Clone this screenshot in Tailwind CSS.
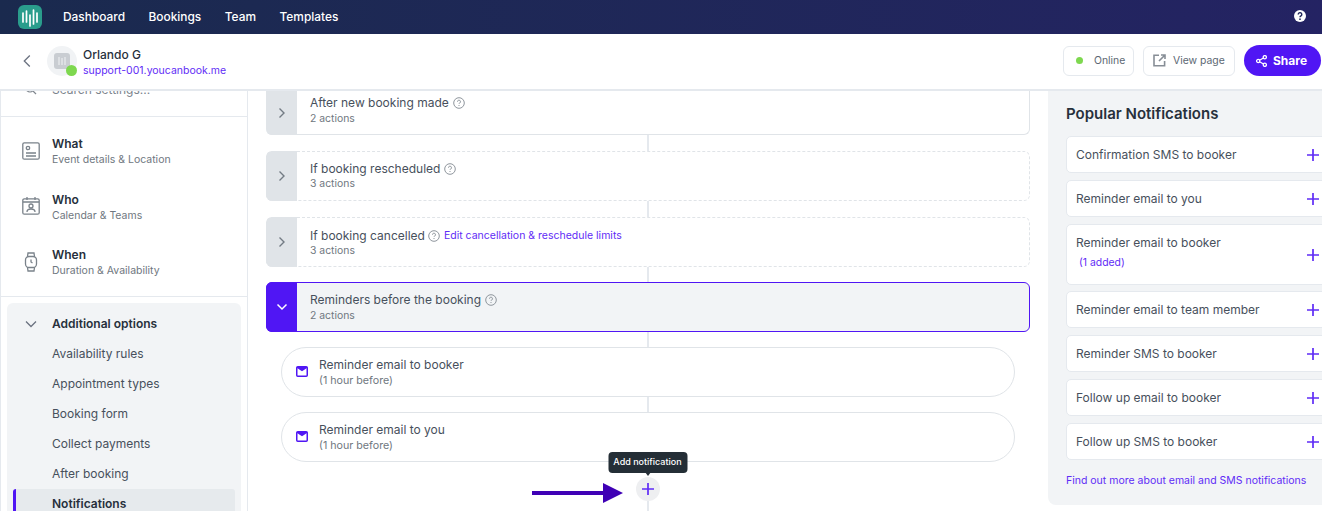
<!DOCTYPE html>
<html lang="en">
<head>
    <meta charset="UTF-8">
    <title>Notifications</title>
    <script src="https://cdn.jsdelivr.net/npm/@tailwindcss/browser@4"></script>
</head>
<body class="h-[511px] w-[1322px] overflow-hidden bg-white font-['Inter',sans-serif] text-[#47505c]">
    <!-- top nav -->
    <nav class="flex h-[34px] items-center bg-gradient-to-r from-[#1a2a4e] to-[#242363] pl-[18px] pr-[15px] text-white">
        <div class="flex h-[24px] w-[24px] items-center justify-center rounded-[6px] bg-[#2a9d8c]">
            <svg width="18" height="19" viewBox="0 0 18 19" fill="none" stroke="#fff" stroke-width="1.700" stroke-linecap="round"><path d="M2 5v9M5.500 3v11M9 7v11M12.500 2v14M16 5v9"/></svg>
        </div>
        <div class="ml-[21px] flex gap-[23.5px] text-[11.9px] font-medium">
            <a>Dashboard</a><a>Bookings</a><a>Team</a><a>Templates</a>
        </div>
        <svg class="ml-auto -mt-[2px]" width="14" height="14" viewBox="0 0 14 14"><circle cx="7" cy="7" r="6" fill="#fff"/><path d="M5.200 5.400a1.800 1.800 0 1 1 2.700 1.600c-.6.300-.9.600-.9 1.200" fill="none" stroke="#1f2659" stroke-width="1.400"/><circle cx="7" cy="10.200" r=".85" fill="#1f2659"/></svg>
    </nav>

    <!-- account header -->
    <header class="relative z-10 flex h-[57px] items-center border-b-2 border-[#e5e9ee] bg-white pb-[2px] pl-[23px] pr-[1px]">
        <svg width="8" height="14" viewBox="0 0 8 14" fill="none" stroke="#6b7280" stroke-width="1.300"><path d="M6.800 1.500 1.300 7l5.500 5.500"/></svg>
        <div class="relative ml-[16px] flex h-[30px] w-[30px] items-center justify-center rounded-full bg-[#f1f3f5]">
            <div class="flex h-[16px] w-[16px] items-center justify-center rounded-[3px] bg-[#c9cdd2]">
                <svg width="10" height="10" viewBox="0 0 10 10" fill="none" stroke="#f1f3f5" stroke-width="1"><path d="M2 1v8M5 2v7M8 1v8"/></svg>
            </div>
            <span class="absolute right-0 bottom-0 h-[11px] w-[11px] rounded-full bg-[#7ed84f]"></span>
        </div>
        <div class="ml-[6px] mt-[3px]">
            <div class="text-[12px] leading-[16px] font-medium text-[#27303c]">Orlando G</div>
            <div class="text-[10.5px] leading-[15px] text-[#5f2cf6]">support-001.youcanbook.me</div>
        </div>
        <div class="ml-auto flex items-center gap-[9px]">
            <div class="flex h-[30px] w-[71px] items-center rounded-[6px] border border-[#e5e9ee] pl-[12px] text-[10.4px] text-[#5c6773]">
                <span class="h-[7px] w-[7px] rounded-full bg-[#7ed84f]"></span><span class="ml-[11px]">Online</span>
            </div>
            <div class="flex h-[30px] w-[92px] items-center rounded-[6px] border border-[#e5e9ee] pl-[9px] text-[10.4px] text-[#5c6773]">
                <svg width="13" height="13" viewBox="0 0 13 13" fill="none" stroke="#878e96" stroke-width="1.600"><path d="M6 1.200H1v10.600h10.600V7M6 7l5.500-5.500M8 1h4v4"/></svg><span class="ml-[7px]">View page</span>
            </div>
            <div class="flex h-[31px] w-[77px] items-center rounded-full bg-[#5016f4] pl-[12px] text-[12px] font-bold text-white">
                <svg width="11" height="12" viewBox="0 0 11 12" fill="none" stroke="#fff" stroke-width="1.300"><circle cx="2.200" cy="6" r="1.600"/><circle cx="8.800" cy="2.200" r="1.600"/><circle cx="8.800" cy="9.800" r="1.600"/><path d="M3.600 5.200 7.400 3M3.600 6.800 7.400 9"/></svg><span class="ml-[6px]">Share</span>
            </div>
        </div>
    </header>

    <div class="relative flex h-[420px] overflow-hidden">
        <!-- settings sidebar -->
        <aside class="h-full w-[248px] shrink-0 overflow-hidden border-x border-[#e5e9ee] bg-white">
            <div class="flex h-[26px] items-start border-b border-[#e5e9ee] pl-[24px]">
                <svg class="mt-[-8px]" width="12" height="12" viewBox="0 0 12 12" fill="none" stroke="#80878f" stroke-width="1.200"><circle cx="5" cy="5" r="4"/><path d="m8 8 3 3"/></svg>
                <span class="mt-[-9px] ml-[15px] text-[12px] leading-[16px] text-[#7b838c]">Search settings...</span>
            </div>
            <div class="flex h-[56px] items-start pt-[20px] pl-[21px]">
                <svg width="18" height="18" viewBox="0 0 18 18" fill="none" stroke="#7a828a" stroke-width="1.300" class="mt-[5px]"><rect x=".8" y=".8" width="16.400" height="16.400" rx="1.500"/><circle cx="6" cy="6" r="1.700"/><path d="M4 11h10M4 14h10"/></svg>
                <div class="ml-[12px] -mt-[1px]">
                    <div class="text-[12px] leading-[16px] font-semibold text-[#27303c]">What</div>
                    <div class="text-[10.5px] leading-[15px] text-[#6f7780]">Event details &amp; Location</div>
                </div>
            </div>
            <div class="flex h-[55px] items-start pt-[20px] pl-[21px]">
                <svg width="18" height="18" viewBox="0 0 18 18" fill="none" stroke="#7a828a" stroke-width="1.300" class="mt-[4px]"><rect x=".8" y="1.800" width="16.400" height="15.400" rx="1.500"/><path d="M1 5h16M5 0v3M13 0v3M5 15c0-2 2-3 4-3s4 1 4 3"/><circle cx="9" cy="9" r="2"/></svg>
                <div class="ml-[12px] -mt-[1px]">
                    <div class="text-[12px] leading-[16px] font-semibold text-[#27303c]">Who</div>
                    <div class="text-[10.5px] leading-[15px] text-[#6f7780]">Calendar &amp; Teams</div>
                </div>
            </div>
            <div class="flex h-[69px] items-start border-b border-[#e5e9ee] pt-[20px] pl-[21px]">
                <svg width="18" height="20" viewBox="0 0 18 20" fill="none" stroke="#7a828a" stroke-width="1.300" class="mt-[4px]"><rect x="3.500" y="4.500" width="11" height="11" rx="3.500"/><path d="M5.500 4.500 6 1h6l.5 3.500M5.500 15.500 6 19h6l.5-3.500M9 7.500V10l1.500 1"/></svg>
                <div class="ml-[12px] -mt-[1px]">
                    <div class="text-[12px] leading-[16px] font-semibold text-[#27303c]">When</div>
                    <div class="text-[10.5px] leading-[15px] text-[#6f7780]">Duration &amp; Availability</div>
                </div>
            </div>
            <div class="mx-[6px] mt-[6px] h-[240px] rounded-[6px] bg-[#f2f4f6] pt-[13px]">
                <div class="flex h-[16px] items-center pl-[18px] text-[12px] font-semibold text-[#27303c]">
                    <svg width="12" height="8" viewBox="0 0 12 8" fill="none" stroke="#6b7280" stroke-width="1.300"><path d="m1 1.500 5 5 5-5"/></svg>
                    <span class="ml-[15px]">Additional options</span>
                </div>
                <div class="mt-[12px] flex flex-col gap-[10px] pl-[45px] text-[12px] leading-[20px]">
                    <a>Availability rules</a>
                    <a>Appointment types</a>
                    <a>Booking form</a>
                    <a>Collect payments</a>
                    <a>After booking</a>
                </div>
                <div class="mx-[6px] mt-[5px] flex h-[30px] items-center rounded-[3px] border-l-[3px] border-[#5016f4] bg-[#e6eaed] pl-[36px] text-[12px] font-semibold text-[#27303c]">Notifications</div>
            </div>
        </aside>

        <!-- notification flow -->
        <main class="w-[800px] shrink-0 pl-[18px]">
            <div class="w-[764px]">
                <div class="flex h-[44px] rounded-b-[6px] border-r border-b border-[#e0e4e8]">
                    <div class="-mb-[1px] flex w-[31px] items-center justify-center rounded-bl-[6px] bg-[#e0e4e8]"><svg width="8" height="12" viewBox="0 0 8 12" fill="none" stroke="#737b84" stroke-width="1.400"><path d="m1.500 1.500 4.500 4.500-4.500 4.500"/></svg></div>
                    <div class="pt-[4px] pl-[13px]">
                        <div class="flex items-center gap-[4px] text-[12px] leading-[16px]">After new booking made <svg width="12" height="12" viewBox="0 0 12 12" fill="none" stroke="#8f969d"><circle cx="6" cy="6" r="5.300"/><path d="M4.500 4.700a1.500 1.500 0 1 1 2.200 1.300c-.5.300-.7.500-.7 1M6 8v1"/></svg></div>
                        <div class="text-[10.4px] leading-[15px] text-[#6f7780]">2 actions</div>
                    </div>
                </div>
                <div class="mx-auto h-[16px] w-[2px] bg-[#e5e9ee]"></div>
                <div class="flex h-[50px] rounded-[6px] border border-dashed border-[#e0e4e8]">
                    <div class="-my-[1px] -ml-[1px] flex w-[31px] items-center justify-center rounded-l-[6px] bg-[#e0e4e8]"><svg width="8" height="12" viewBox="0 0 8 12" fill="none" stroke="#737b84" stroke-width="1.400"><path d="m1.500 1.500 4.500 4.500-4.500 4.500"/></svg></div>
                    <div class="pt-[9px] pl-[13px]">
                        <div class="flex items-center gap-[4px] text-[12px] leading-[16px]">If booking rescheduled <svg width="12" height="12" viewBox="0 0 12 12" fill="none" stroke="#8f969d"><circle cx="6" cy="6" r="5.300"/><path d="M4.500 4.700a1.500 1.500 0 1 1 2.200 1.300c-.5.300-.7.500-.7 1M6 8v1"/></svg></div>
                        <div class="text-[10.4px] leading-[14px] text-[#6f7780]">3 actions</div>
                    </div>
                </div>
                <div class="mx-auto h-[16px] w-[2px] bg-[#e5e9ee]"></div>
                <div class="flex h-[50px] rounded-[6px] border border-dashed border-[#e0e4e8]">
                    <div class="-my-[1px] -ml-[1px] flex w-[31px] items-center justify-center rounded-l-[6px] bg-[#e0e4e8]"><svg width="8" height="12" viewBox="0 0 8 12" fill="none" stroke="#737b84" stroke-width="1.400"><path d="m1.500 1.500 4.500 4.500-4.500 4.500"/></svg></div>
                    <div class="pt-[9px] pl-[13px]">
                        <div class="flex items-center text-[12px] leading-[16px]">If booking cancelled <svg class="ml-[3px]" width="12" height="12" viewBox="0 0 12 12" fill="none" stroke="#8f969d"><circle cx="6" cy="6" r="5.300"/><path d="M4.500 4.700a1.500 1.500 0 1 1 2.200 1.300c-.5.300-.7.500-.7 1M6 8v1"/></svg><span class="ml-[4px] pt-[1px] text-[10.5px] text-[#5f2cf6]">Edit cancellation &amp; reschedule limits</span></div>
                        <div class="text-[10.4px] leading-[14px] text-[#6f7780]">3 actions</div>
                    </div>
                </div>
                <div class="mx-auto h-[15px] w-[2px] bg-[#e5e9ee]"></div>
                <div class="flex h-[50px] rounded-[6px] border border-[#5016f4] bg-[#f2f4f6]">
                    <div class="-my-[1px] -ml-[1px] flex w-[31px] items-center justify-center rounded-l-[6px] bg-[#5016f4]"><svg width="12" height="8" viewBox="0 0 12 8" fill="none" stroke="#fff" stroke-width="1.500"><path d="m1.500 1.500 4.500 4.500 4.500-4.500"/></svg></div>
                    <div class="pt-[9px] pl-[13px]">
                        <div class="flex items-center gap-[4px] text-[12px] leading-[16px]">Reminders before the booking <svg width="12" height="12" viewBox="0 0 12 12" fill="none" stroke="#8f969d"><circle cx="6" cy="6" r="5.300"/><path d="M4.500 4.700a1.500 1.500 0 1 1 2.200 1.300c-.5.300-.7.500-.7 1M6 8v1"/></svg></div>
                        <div class="text-[10.4px] leading-[15px] text-[#6f7780]">2 actions</div>
                    </div>
                </div>
                <div class="mx-auto h-[15px] w-[2px] bg-[#e5e9ee]"></div>
                <div class="mx-[15px] flex h-[50px] items-center rounded-full border border-[#e0e4e8] pl-[14px]">
                    <svg class="-mt-[2px]" width="12" height="11" viewBox="0 0 12 11" fill="none"><rect x=".75" y=".75" width="10.500" height="9.500" rx="1" stroke="#5016f4" stroke-width="1.500"/><path fill="#5016f4" d="M1 1h10v1L6 5.200 1 2Z"/></svg>
                    <div class="ml-[11px]">
                        <div class="text-[12px] leading-[16px]">Reminder email to booker</div>
                        <div class="text-[10.7px] leading-[15px] text-[#6f7780]">(1 hour before)</div>
                    </div>
                </div>
                <div class="mx-auto h-[15px] w-[2px] bg-[#e5e9ee]"></div>
                <div class="mx-[15px] flex h-[50px] items-center rounded-full border border-[#e0e4e8] pl-[14px]">
                    <svg class="-mt-[2px]" width="12" height="11" viewBox="0 0 12 11" fill="none"><rect x=".75" y=".75" width="10.500" height="9.500" rx="1" stroke="#5016f4" stroke-width="1.500"/><path fill="#5016f4" d="M1 1h10v1L6 5.200 1 2Z"/></svg>
                    <div class="ml-[11px]">
                        <div class="text-[12px] leading-[16px]">Reminder email to you</div>
                        <div class="text-[10.7px] leading-[15px] text-[#6f7780]">(1 hour before)</div>
                    </div>
                </div>
                <div class="relative mx-auto mt-[15px] flex h-[24px] w-[24px] items-center justify-center rounded-full bg-[#eeeff1]">
                    <svg width="12" height="12" viewBox="0 0 12 12" stroke="#5f2cf6" stroke-width="1.700"><path d="M6 0v12M0 6h12"/></svg>
                    <div class="absolute top-[-25px] left-1/2 flex h-[21px] w-[79px] -translate-x-1/2 items-center justify-center rounded-[4px] bg-[#242e36] pr-[1px] pb-[1px] text-[9px] font-medium whitespace-nowrap text-white">Add notification</div>
                    <div class="absolute top-[-5px] left-1/2 h-0 w-0 -translate-x-1/2 border-x-[3px] border-t-[4px] border-x-transparent border-t-[#242e36]"></div>
                    <!-- annotation arrow -->
                    <svg class="absolute top-[6px] left-[-104px]" width="91" height="20" viewBox="0 0 91 20"><path fill="#3f00b5" d="M0 8h71V0l20 10-20 10v-8H0Z"/></svg>
                </div>
                <div class="mx-auto h-[12px] w-[2px] bg-[#e5e9ee]"></div>
            </div>
        </main>

        <!-- popular notifications -->
        <section class="-mt-[1px] h-[415px] w-[300px] shrink-0 rounded-b-[8px] bg-[#f2f4f6] pt-[14px] pl-[18px]">
            <h2 class="text-[15px] leading-[20px] font-semibold text-[#27303c]">Popular Notifications</h2>
            <div class="mt-[12px] flex w-[280px] flex-col gap-[7px] text-[12px]">
                <div class="flex h-[37px] items-center rounded-[5px] border border-[#e5e9ee] bg-white pl-[9px]">Confirmation SMS to booker<svg class="absolute left-[1307px]" width="12" height="12" viewBox="0 0 12 12" stroke="#5f2cf6" stroke-width="1.700"><path d="M6 0v12M0 6h12"/></svg></div>
                <div class="flex h-[37px] items-center rounded-[5px] border border-[#e5e9ee] bg-white pl-[9px]">Reminder email to you<svg class="absolute left-[1307px]" width="12" height="12" viewBox="0 0 12 12" stroke="#5f2cf6" stroke-width="1.700"><path d="M6 0v12M0 6h12"/></svg></div>
                <div class="-mb-[1px] flex h-[61px] items-center rounded-[5px] border border-[#e5e9ee] bg-white pl-[9px]">
                    <div class="-mt-[5px]"><div class="leading-[16px]">Reminder email to booker</div><div class="mt-[4px] pl-[3px] text-[10.4px] leading-[15px] text-[#5f2cf6]">(1 added)</div></div>
                    <svg class="absolute left-[1307px]" width="12" height="12" viewBox="0 0 12 12" stroke="#5f2cf6" stroke-width="1.700"><path d="M6 0v12M0 6h12"/></svg>
                </div>
                <div class="flex h-[37px] items-center rounded-[5px] border border-[#e5e9ee] bg-white pl-[9px]">Reminder email to team member<svg class="absolute left-[1307px]" width="12" height="12" viewBox="0 0 12 12" stroke="#5f2cf6" stroke-width="1.700"><path d="M6 0v12M0 6h12"/></svg></div>
                <div class="flex h-[37px] items-center rounded-[5px] border border-[#e5e9ee] bg-white pl-[9px]">Reminder SMS to booker<svg class="absolute left-[1307px]" width="12" height="12" viewBox="0 0 12 12" stroke="#5f2cf6" stroke-width="1.700"><path d="M6 0v12M0 6h12"/></svg></div>
                <div class="flex h-[37px] items-center rounded-[5px] border border-[#e5e9ee] bg-white pl-[9px]">Follow up email to booker<svg class="absolute left-[1307px]" width="12" height="12" viewBox="0 0 12 12" stroke="#5f2cf6" stroke-width="1.700"><path d="M6 0v12M0 6h12"/></svg></div>
                <div class="flex h-[37px] items-center rounded-[5px] border border-[#e5e9ee] bg-white pl-[9px]">Follow up SMS to booker<svg class="absolute left-[1307px]" width="12" height="12" viewBox="0 0 12 12" stroke="#5f2cf6" stroke-width="1.700"><path d="M6 0v12M0 6h12"/></svg></div>
            </div>
            <a class="mt-[13px] block text-[10.5px] leading-[16px] text-[#5f2cf6]">Find out more about email and SMS notifications</a>
        </section>
    </div>
</body>
</html>
